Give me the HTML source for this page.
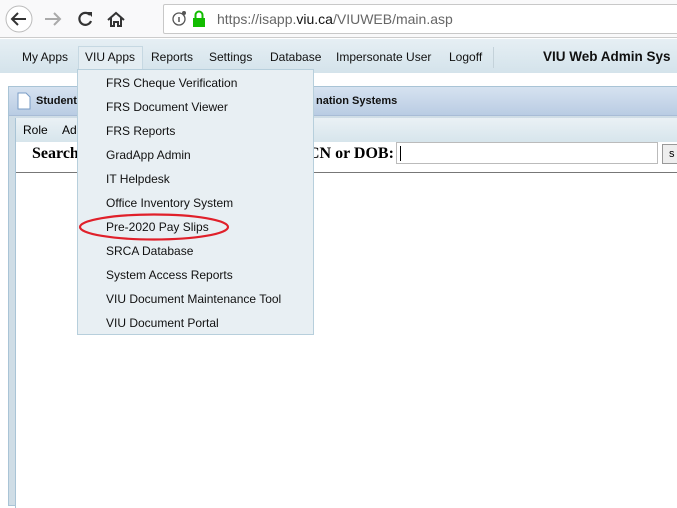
<!DOCTYPE html>
<html><head><style>
*{margin:0;padding:0;box-sizing:border-box}
body{width:677px;height:496px;overflow:hidden;background:#fff;font-family:"Liberation Sans",sans-serif;position:relative}
.abs{position:absolute}
#chrome{left:0;top:0;width:677px;height:38px;background:#f9f9fa;border-bottom:1px solid #ccc}
#addr{left:163px;top:4px;width:520px;height:30px;background:#fff;border:1px solid #c8c8c8;border-radius:2px}
#menubar{left:0;top:39px;width:677px;height:34px;background:linear-gradient(#e6eff4,#d4e3eb)}
.mi{position:absolute;top:11px;font-size:12px;color:#111}
#panel{left:8px;top:86px;width:680px;height:420px;border:1px solid #a9c4d6;background:#cfdde6}
#hdr{left:9px;top:87px;width:680px;height:29px;background:linear-gradient(#d6e2f0,#b9cce3);border-bottom:1px solid #a8bcd6}
#inner{left:15px;top:118px;width:670px;height:390px;background:#fff;border-left:1px solid #a9c4d6}
#tb{left:16px;top:118px;width:670px;height:24px;background:linear-gradient(#eaf1f5,#d7e5ec);font-size:12px}
#dd{left:77px;top:69px;width:237px;height:266px;background:#e8eff3;border:1px solid #b7cfdc}
.di{position:absolute;left:28px;font-size:12px;color:#111}
</style></head><body>
<div id="chrome" class="abs"></div>
<svg class="abs" style="left:4px;top:4px" width="150" height="30">
<circle cx="15" cy="15" r="13" fill="#fff" stroke="#bbb"/>
<path d="M22 15H9M14 9l-6 6 6 6" stroke="#333" stroke-width="2" fill="none"/>
<path d="M56 15H41M50 9l6 6-6 6" stroke="#aaa" stroke-width="2" fill="none"/>
<path d="M86 11a6 6 0 1 0 1 6" stroke="#333" stroke-width="2.2" fill="none"/><path d="M83 8h5v5z" fill="#333"/>
<path d="M104 16l8-7 8 7M107 14v8h3v-4h4v4h3v-8" stroke="#333" stroke-width="2" fill="none"/>
</svg>
<div id="addr" class="abs"></div>
<svg class="abs" style="left:172px;top:10px" width="40" height="20">
<circle cx="7" cy="9" r="6" fill="none" stroke="#555" stroke-width="1.3"/><path d="M7 7v5" stroke="#555" stroke-width="1.5"/><circle cx="12" cy="3" r="2" fill="#555"/>
<rect x="21" y="8" width="12" height="9" fill="#12bc00"/><path d="M23.5 8V5a3.5 3.5 0 0 1 7 0v3" stroke="#12bc00" stroke-width="2" fill="none"/>
</svg>
<div class="abs" style="left:217px;top:11px;font-size:14px;color:#666">https://isapp.<span style="color:#111">viu.ca</span>/VIUWEB/main.asp</div>
<div id="menubar" class="abs">
<span class="mi" style="left:22px">My Apps</span>
<span class="abs" style="left:78px;top:7px;width:65px;height:27px;border:1px solid #c6d8e2;border-bottom:none;background:#e4edf2"></span>
<span class="mi" style="left:85px">VIU Apps</span>
<span class="mi" style="left:151px">Reports</span>
<span class="mi" style="left:209px">Settings</span>
<span class="mi" style="left:270px">Database</span>
<span class="mi" style="left:336px">Impersonate User</span>
<span class="mi" style="left:449px">Logoff</span>
<span class="abs" style="left:493px;top:8px;width:1px;height:21px;background:#c4d2da"></span>
<span class="mi" style="left:543px;top:10px;font-weight:bold;font-size:13.5px">VIU Web Admin Sys</span>
</div>
<div id="panel" class="abs"></div>
<div id="hdr" class="abs"></div>
<svg class="abs" style="left:17px;top:92px" width="14" height="18"><path d="M1 1h8l4 4v12H1z" fill="#fff" stroke="#7a9cc6"/></svg>
<div class="abs" style="left:36px;top:95px;font-size:11px;font-weight:bold;color:#111">Student</div>
<div class="abs" style="left:316px;top:95px;font-size:11px;font-weight:bold;color:#111">nation Systems</div>
<div id="inner" class="abs"></div>
<div id="tb" class="abs"><span class="abs" style="left:7px;top:5px">Role</span><span class="abs" style="left:46px;top:5px">Ad</span></div>
<div class="abs" style="left:32px;top:145px;font-family:'Liberation Serif',serif;font-weight:bold;font-size:16px">Search</div>
<div class="abs" style="left:308px;top:145px;font-family:'Liberation Serif',serif;font-weight:bold;font-size:16px">CN or DOB:</div>
<div class="abs" style="left:396px;top:142px;width:262px;height:22px;border:1px solid #bbb;background:#fff"><div style="position:absolute;left:3px;top:3px;width:1px;height:15px;background:#000"></div></div>
<div class="abs" style="left:662px;top:144px;width:20px;height:20px;border:1px solid #999;background:#eee;font-size:11px;padding:3px 6px">s</div>
<div class="abs" style="left:16px;top:172px;width:670px;height:1px;background:#777"></div>
<div id="dd" class="abs">
<span class="di" style="top:6px">FRS Cheque Verification</span>
<span class="di" style="top:30px">FRS Document Viewer</span>
<span class="di" style="top:54px">FRS Reports</span>
<span class="di" style="top:78px">GradApp Admin</span>
<span class="di" style="top:102px">IT Helpdesk</span>
<span class="di" style="top:126px">Office Inventory System</span>
<span class="di" style="top:150px">Pre-2020 Pay Slips</span>
<span class="di" style="top:174px">SRCA Database</span>
<span class="di" style="top:198px">System Access Reports</span>
<span class="di" style="top:222px">VIU Document Maintenance Tool</span>
<span class="di" style="top:246px">VIU Document Portal</span>
</div>
<svg class="abs" style="left:77px;top:211px" width="156" height="32"><ellipse cx="77" cy="16" rx="74" ry="12.5" fill="none" stroke="#e0202a" stroke-width="2.2"/></svg>
</body></html>
